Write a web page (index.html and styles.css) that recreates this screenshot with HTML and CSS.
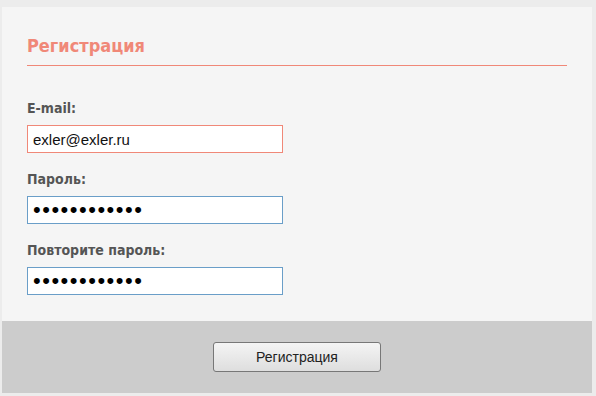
FILE: index.html
```html
<!DOCTYPE html>
<html lang="ru">
<head>
    <meta charset="UTF-8">
    <title>Регистрация</title>
    <link rel="stylesheet" href="styles.css">
</head>
<body>
    <div class="register-box">
        <div class="register-body">
            <h1 class="register-title">Регистрация</h1>

            <form id="registerForm">
                <div class="form-group">
                    <label for="email">E-mail:</label>
                    <input type="text" id="email" class="field-error" value="exler@exler.ru">
                </div>

                <div class="form-group">
                    <label for="password">Пароль:</label>
                    <input type="password" id="password" value="exlerexler12">
                </div>

                <div class="form-group">
                    <label for="password2">Повторите пароль:</label>
                    <input type="password" id="password2" value="exlerexler12">
                </div>
            </form>
        </div>

        <div class="register-footer">
            <button type="submit" form="registerForm" class="register-button">Регистрация</button>
        </div>
    </div>
</body>
</html>
```

FILE: styles.css
```css
:root {
    --page-bg: #ececec;
    --box-bg: #f5f5f5;
    --footer-bg: #cccccc;
    --accent: #f08878;
    --label: #555555;
    --field-border: #6a9ec8;
}

* {
    margin: 0;
    padding: 0;
    box-sizing: border-box;
}

body {
    background: var(--page-bg);
    font-family: 'Liberation Sans', Arial, sans-serif;
    padding: 7px 4px 3px 2px;
    height: 396px;
}

.register-box {
    background: var(--box-bg);
    width: 590px;
}

.register-body {
    padding: 28px 25px 8px 25px;
}

.register-title {
    font-family: 'DejaVu Sans Condensed', 'DejaVu Sans', sans-serif;
    font-size: 18px;
    font-weight: 700;
    color: var(--accent);
    width: 540px;
    padding-bottom: 9px;
    border-bottom: 1px solid var(--accent);
    margin-bottom: 34px;
}

.form-group {
    margin-bottom: 18px;
}

.form-group label {
    display: block;
    font-family: 'DejaVu Sans Condensed', 'DejaVu Sans', sans-serif;
    font-size: 14px;
    font-weight: 700;
    color: var(--label);
    margin-bottom: 9px;
}

.form-group input {
    display: block;
    width: 256px;
    height: 28px;
    padding: 0 5px;
    border: 1px solid var(--field-border);
    background: white;
    font-family: 'Liberation Sans', Arial, sans-serif;
    font-size: 15px;
    color: #111;
}

.form-group input[type="password"] {
    font-size: 22px;
    letter-spacing: 1.5px;
    color: #000;
}

.form-group input.field-error {
    border-color: var(--accent);
}

.register-footer {
    background: var(--footer-bg);
    height: 72px;
    display: flex;
    align-items: center;
    justify-content: center;
}

.register-button {
    width: 168px;
    height: 30px;
    border: 1px solid #777;
    border-radius: 3px;
    background: linear-gradient(#f4f4f4, #dedede);
    font-family: 'Liberation Sans', Arial, sans-serif;
    font-size: 14px;
    color: #222;
    cursor: pointer;
}
```
